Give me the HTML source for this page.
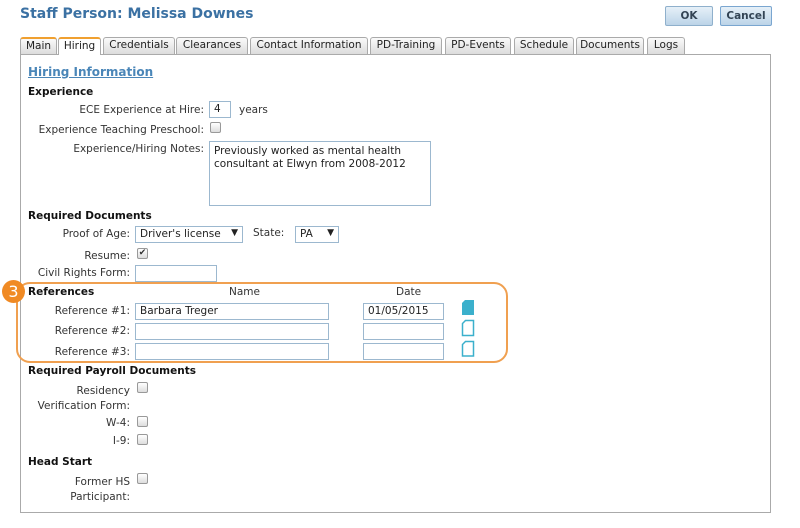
<!DOCTYPE html>
<html><head><meta charset="utf-8"><style>
*{box-sizing:border-box;margin:0;padding:0}
body{width:800px;height:528px;background:#fff;font-family:"DejaVu Sans","Liberation Sans",sans-serif;font-size:10.5px;color:#333;position:relative;overflow:hidden}
.a{position:absolute;white-space:nowrap}
.r{position:absolute;white-space:nowrap;text-align:right}
.b{font-weight:bold;color:#111}
.in{position:absolute;border:1px solid #9cb8cf;background:#fff;height:17px;padding:1px 4px;font-size:10.5px;color:#222}
.cb{position:absolute;width:11px;height:11px;border:1px solid #999;border-radius:2px;background:linear-gradient(#fff,#ddd)}
.tab{position:absolute;top:37px;height:17px;border:1px solid #aaa;border-bottom:none;border-radius:3px 3px 0 0;background:linear-gradient(#fafafa,#dcdcdc);font-size:10.5px;color:#222;text-align:center;line-height:15px}
.btn{position:absolute;top:6px;height:20px;border:1px solid #8fb0cc;border-radius:2px;background:linear-gradient(#e6f0f8,#bcd4e8);font-weight:bold;color:#345;font-size:10.5px;text-align:center;line-height:18px}
</style></head><body>
<div class="a" style="left:20px;top:6px;font-size:14px;font-weight:bold;color:#3b71a3">Staff Person: Melissa Downes</div>
<div class="btn" style="left:665px;width:48px">OK</div>
<div class="btn" style="left:720px;width:52px;border-color:#7aa6d0">Cancel</div>

<div class="tab" style="left:20px;width:37px;border-top:2px solid #f0a030">Main</div>
<div class="tab" style="left:58px;width:43px;background:#fff;height:18px;border-top:2px solid #f0a030;z-index:2">Hiring</div>
<div class="tab" style="left:103px;width:72px">Credentials</div>
<div class="tab" style="left:176px;width:72px">Clearances</div>
<div class="tab" style="left:250px;width:118px">Contact Information</div>
<div class="tab" style="left:370px;width:72px">PD-Training</div>
<div class="tab" style="left:445px;width:66px">PD-Events</div>
<div class="tab" style="left:514px;width:60px">Schedule</div>
<div class="tab" style="left:576px;width:68px">Documents</div>
<div class="tab" style="left:647px;width:38px">Logs</div>
<div class="a" style="left:20px;top:54px;width:751px;height:459px;border:1px solid #aaa"></div>

<div class="a" style="left:28px;top:65px;font-size:12px;font-weight:bold;color:#4a86b8;text-decoration:underline">Hiring Information</div>
<div class="a b" style="left:28px;top:86px">Experience</div>
<div class="r" style="right:596px;top:104px">ECE Experience at Hire:</div>
<div class="in" style="left:209px;top:101px;width:22px">4</div>
<div class="a" style="left:239px;top:104px">years</div>
<div class="r" style="right:596px;top:124px">Experience Teaching Preschool:</div>
<div class="cb" style="left:210px;top:122px"></div>
<div class="r" style="right:596px;top:143px">Experience/Hiring Notes:</div>
<div class="in" style="left:209px;top:141px;width:222px;height:65px;white-space:normal;line-height:13px;padding:3px 4px">Previously worked as mental health consultant at Elwyn from 2008-2012</div>

<div class="a b" style="left:28px;top:210px">Required Documents</div>
<div class="r" style="right:670px;top:228px">Proof of Age:</div>
<div class="in" style="left:135px;top:226px;width:108px">Driver's license<span style="position:absolute;right:4px;font-size:9px">▼</span></div>
<div class="a" style="left:253px;top:227px">State:</div>
<div class="in" style="left:295px;top:226px;width:44px">PA<span style="position:absolute;right:4px;font-size:9px">▼</span></div>
<div class="r" style="right:670px;top:250px">Resume:</div>
<div class="cb" style="left:137px;top:248px;font-size:9px;line-height:9px;text-align:center;color:#333">✔</div>
<div class="r" style="right:670px;top:267px">Civil Rights Form:</div>
<div class="in" style="left:135px;top:265px;width:82px"></div>

<div class="a" style="left:16px;top:282px;width:492px;height:81px;border:2px solid #f0a050;border-radius:14px"></div>
<div class="a" style="left:2px;top:280px;width:23px;height:23px;border-radius:50%;background:#f08a24;color:#fff;font-size:16px;text-align:center;line-height:23px">3</div>
<div class="a b" style="left:28px;top:286px">References</div>
<div class="a" style="left:229px;top:286px">Name</div>
<div class="a" style="left:396px;top:286px">Date</div>
<div class="r" style="right:670px;top:305px">Reference #1:</div>
<div class="in" style="left:135px;top:303px;width:194px">Barbara Treger</div>
<div class="in" style="left:363px;top:303px;width:81px">01/05/2015</div>
<div class="r" style="right:670px;top:325px">Reference #2:</div>
<div class="in" style="left:135px;top:323px;width:194px"></div>
<div class="in" style="left:363px;top:323px;width:81px"></div>
<div class="r" style="right:670px;top:346px">Reference #3:</div>
<div class="in" style="left:135px;top:343px;width:194px"></div>
<div class="in" style="left:363px;top:343px;width:81px"></div>
<svg class="a" style="left:461px;top:299px" width="14" height="58" viewBox="0 0 14 58">
<path d="M4 1H13V16H1V4Z" fill="#3bb0cc"/>
<path d="M4.5 21.5H12.5V36.5H1.5V24.5Z" fill="none" stroke="#3bb0cc" stroke-width="1.5"/>
<path d="M4.5 42.5H12.5V57H1.5V45.5Z" fill="none" stroke="#3bb0cc" stroke-width="1.5"/>
</svg>

<div class="a b" style="left:28px;top:365px">Required Payroll Documents</div>
<div class="r" style="right:670px;top:384px;line-height:15px">Residency<br>Verification Form:</div>
<div class="cb" style="left:137px;top:382px"></div>
<div class="r" style="right:670px;top:417px">W-4:</div>
<div class="cb" style="left:137px;top:416px"></div>
<div class="r" style="right:670px;top:435px">I-9:</div>
<div class="cb" style="left:137px;top:434px"></div>
<div class="a b" style="left:28px;top:456px">Head Start</div>
<div class="r" style="right:670px;top:475px;line-height:15px">Former HS<br>Participant:</div>
<div class="cb" style="left:137px;top:473px"></div>
</body></html>
